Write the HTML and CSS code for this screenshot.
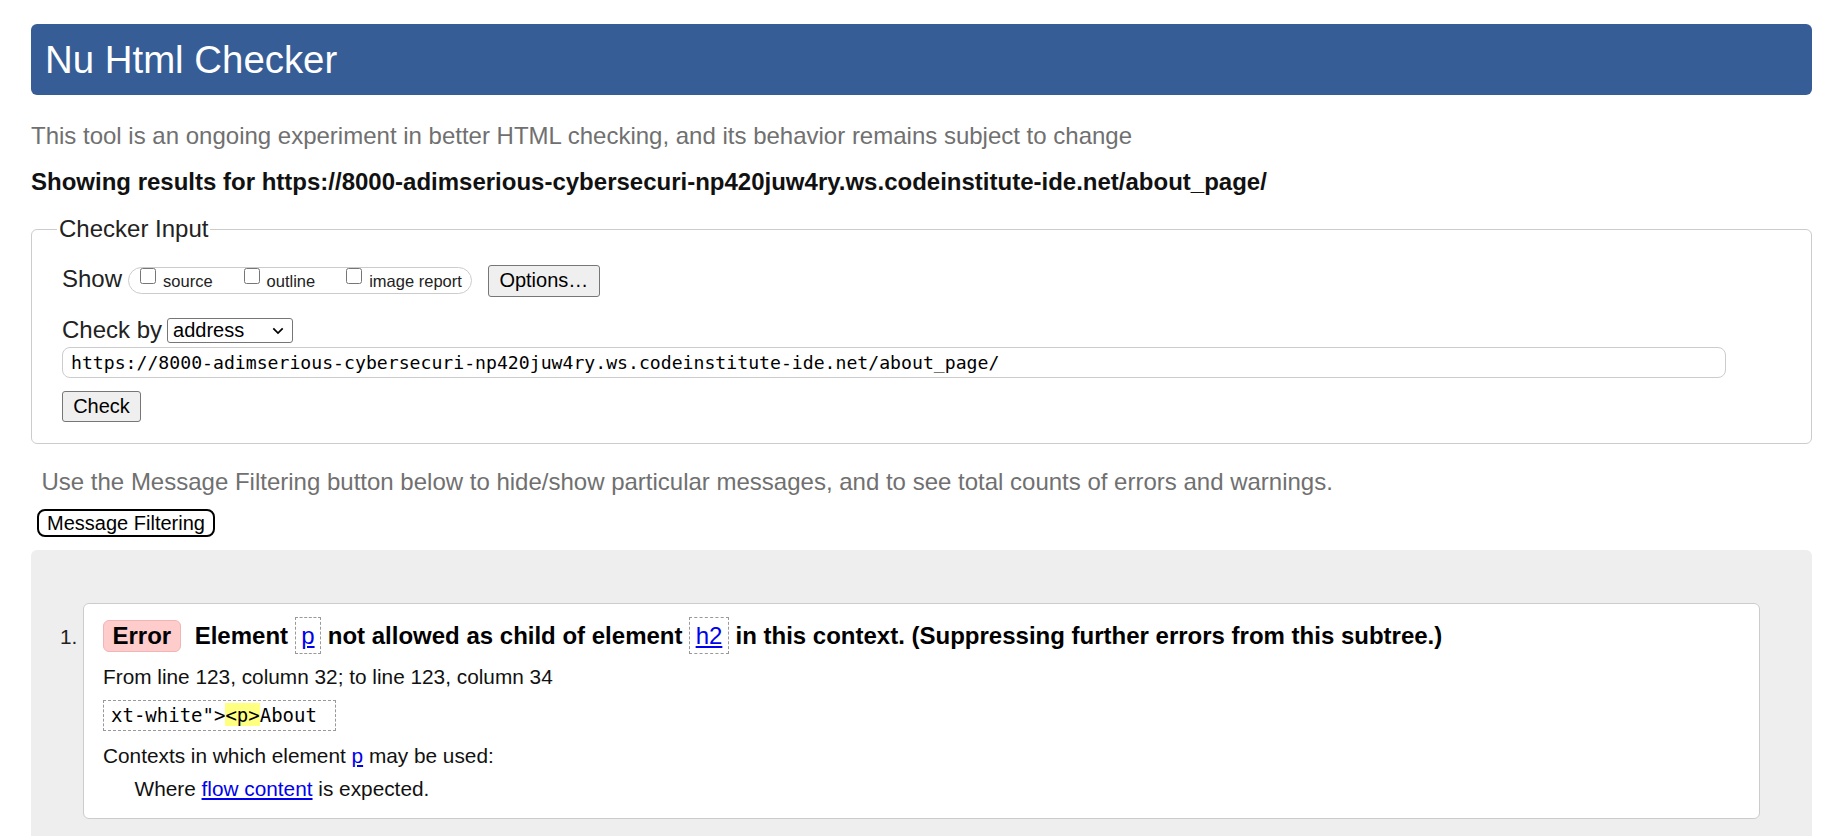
FILE: index.html
```html
<!DOCTYPE html>
<html lang="en">
<head>
<meta charset="utf-8">
<title>Nu Html Checker</title>
<link rel="stylesheet" href="styles.css">
</head>
<body>
<div class="page">
  <h1 class="title">Nu Html Checker</h1>
  <p class="intro">This tool is an ongoing experiment in better HTML checking, and its behavior remains subject to change</p>
  <p class="results-for">Showing results for https://8000-adimserious-cybersecuri-np420juw4ry.ws.codeinstitute-ide.net/about_page/</p>
  <form class="checker">
    <fieldset class="checker-input">
      <legend class="checker-legend">Checker Input</legend>
      <div class="show-row">
        <span class="row-label show-label">Show</span>
        <div class="show-pill">
          <label class="show-opt"><input type="checkbox" class="cb"><span class="opt-text">source</span></label>
          <label class="show-opt"><input type="checkbox" class="cb"><span class="opt-text">outline</span></label>
          <label class="show-opt"><input type="checkbox" class="cb"><span class="opt-text">image report</span></label>
        </div>
        <button type="button" class="btn btn-options">Options…</button>
      </div>
      <div class="checkby-row">
        <span class="row-label checkby-label">Check by</span>
        <span class="select-wrap">
          <select class="select"><option>address</option></select>
          <svg class="select-arrow" width="12" height="8" viewBox="0 0 12 8" aria-hidden="true"><path d="M1.3 1.4 L6 6.1 L10.7 1.4" fill="none" stroke="#000" stroke-width="1.7"/></svg>
        </span>
      </div>
      <input class="url" type="text" value="https://8000-adimserious-cybersecuri-np420juw4ry.ws.codeinstitute-ide.net/about_page/">
      <button type="button" class="btn btn-check">Check</button>
    </fieldset>
  </form>
  <p class="filter-hint">Use the Message Filtering button below to hide/show particular messages, and to see total counts of errors and warnings.</p>
  <button type="button" class="btn-filter">Message Filtering</button>
  <div class="results">
    <ol class="messages">
      <li class="message">
        <div class="msg-head">
          <span class="badge-error">Error</span>
          <span class="msg-text">Element <code class="tag"><a href="#">p</a></code> not allowed as child of element <code class="tag"><a href="#">h2</a></code> in this context. (Suppressing further errors from this subtree.)</span>
        </div>
        <p class="location">From line 123, column 32; to line 123, column 34</p>
        <div class="extract-line"><code class="extract">xt-white"&gt;<mark class="hl">&lt;p&gt;</mark>About </code></div>
        <p class="contexts">Contexts in which element <a href="#">p</a> may be used:</p>
        <p class="where">Where <a href="#">flow content</a> is expected.</p>
      </li>
    </ol>
  </div>
</div>
</body>
</html>
```
FILE: styles.css
```css
* {
  box-sizing: border-box;
}

html,
body {
  margin: 0;
  padding: 0;
}

body {
  font-family: "Liberation Sans", Arial, sans-serif;
  color: #000;
  background: #fff;
  overflow: hidden;
}

a {
  color: #0000ee;
}

.page {
  margin-left: 31px;
  width: 1781px;
  height: 836px;
  padding-top: 24px;
  display: flex;
  flex-direction: column;
}

.title {
  margin: 0;
  height: 71px;
  padding: 0 14px;
  background: #365d95;
  color: #fff;
  border-radius: 6px;
  font-size: 38.4px;
  font-weight: normal;
  line-height: 71px;
}

.intro {
  margin: 23px 0 0;
  font-size: 24px;
  line-height: 36px;
  color: #707070;
}

.results-for {
  margin: 10px 0 0;
  font-size: 24px;
  line-height: 36px;
  font-weight: bold;
  color: #111;
}

.checker {
  margin: 11px 0 0;
}

.checker-input {
  margin: 0;
  min-width: 0;
  border: 1px solid #cccccc;
  border-radius: 6px;
  padding: 0 29px 21px 30px;
}

.checker-legend {
  margin-left: -5px;
  padding: 0 2px;
  font-size: 24px;
  line-height: 36px;
  color: #222;
}

.row-label {
  font-size: 24px;
  color: #222;
}

.show-row {
  margin-top: 18px;
  display: flex;
  align-items: flex-start;
  height: 32px;
}

.show-label {
  line-height: 32px;
  margin-top: -2px;
}

.show-pill {
  margin: 2px 0 0 6px;
  height: 27px;
  display: flex;
  align-items: flex-start;
  border: 1px solid #cccccc;
  border-radius: 14px;
  padding: 0 9px 0 11px;
}

.show-opt {
  display: flex;
  align-items: flex-start;
}

.show-opt + .show-opt {
  margin-left: 31px;
}

.cb {
  margin: 0;
  width: 16px;
  height: 16px;
}

.opt-text {
  margin: 5px 0 0 7px;
  font-size: 16.5px;
  line-height: 16.5px;
  color: #222;
}

.btn {
  display: block;
  margin: 0;
  padding: 0;
  background: #efefef;
  border: 1px solid #767676;
  border-radius: 3px;
  font-family: "Liberation Sans", Arial, sans-serif;
  font-size: 20px;
  color: #000;
  text-align: center;
}

.btn-options {
  margin-left: 16px;
  width: 112px;
  height: 32px;
  line-height: 28px;
  padding-bottom: 2px;
}

.checkby-row {
  margin-top: 21px;
  display: flex;
  align-items: flex-start;
  height: 25px;
}

.checkby-label {
  line-height: 25px;
  margin-top: -1px;
}

.select-wrap {
  position: relative;
  margin-left: 4.5px;
  display: block;
}

.select {
  display: block;
  appearance: none;
  -webkit-appearance: none;
  width: 126px;
  height: 25px;
  margin: 0;
  padding: 0 0 0 5.5px;
  background: #fff;
  border: 1px solid #767676;
  border-radius: 3px;
  font-family: "Liberation Sans", Arial, sans-serif;
  font-size: 20px;
  line-height: 23px;
  color: #000;
}

.select-arrow {
  position: absolute;
  right: 9px;
  top: 9px;
  pointer-events: none;
}

.url {
  display: block;
  margin-top: 4px;
  width: 1664px;
  height: 31px;
  padding: 0 8px;
  border: 1px solid #cccccc;
  border-radius: 8px;
  font-family: "DejaVu Sans Mono", "Liberation Mono", monospace;
  font-size: 18.15px;
  color: #000;
  background: #fff;
}

.btn-check {
  margin-top: 13px;
  width: 79px;
  height: 31px;
  line-height: 29px;
}

.filter-hint {
  margin: 20px 0 0 10.5px;
  font-size: 24px;
  line-height: 36px;
  color: #707070;
}

.btn-filter {
  align-self: flex-start;
  margin: 9px 0 0 6px;
  width: 178px;
  height: 28px;
  padding: 0;
  background: #fff;
  border: 2px solid #000;
  border-radius: 8px;
  font-family: "Liberation Sans", Arial, sans-serif;
  font-size: 20px;
  line-height: 24px;
  color: #000;
  text-align: center;
}

.results {
  margin-top: 13px;
  flex: 1;
  background: #eeeeee;
  border-radius: 6px 6px 0 0;
  padding: 53px 52px 0 52px;
  overflow: hidden;
}

.messages {
  margin: 0;
  padding: 0;
  list-style: decimal outside;
}

.message {
  background: #fff;
  border: 1px solid #cccccc;
  border-radius: 6px;
  padding: 16px 19px 14px 19px;
  font-size: 20.8px;
  color: #111;
}

.message::marker {
  font-size: 20.8px;
  color: #222;
}

.msg-head {
  display: flex;
  align-items: center;
}

.badge-error {
  display: block;
  background: #ffcccc;
  border: 1px solid #f2b5b5;
  border-radius: 6px;
  padding: 0 8.5px;
  font-size: 24px;
  line-height: 30px;
  font-weight: bold;
  color: #000;
}

.msg-text {
  margin-left: 14px;
  font-size: 24px;
  line-height: 30px;
  font-weight: bold;
  color: #000;
}

.tag {
  font-family: "Liberation Sans", Arial, sans-serif;
  font-weight: normal;
  font-size: 24px;
  border: 1px dashed #999;
  padding: 4px 5.5px;
}

.location {
  margin: 10px 0 0;
  line-height: 30px;
}

.extract-line {
  margin-top: 7.5px;
  display: flex;
}

.extract {
  display: block;
  border: 1px dashed #999;
  padding: 3px 7px;
  font-family: "DejaVu Sans Mono", "Liberation Mono", monospace;
  font-size: 19px;
  line-height: 23.4px;
  white-space: pre;
  color: #000;
}

.hl {
  background: #ffff80;
  color: #000;
  padding: 0.5px 0;
}

.contexts {
  margin: 10px 0 0;
  line-height: 30px;
}

.where {
  margin: 3px 0 0;
  padding-left: 31.5px;
  line-height: 30px;
}
```
